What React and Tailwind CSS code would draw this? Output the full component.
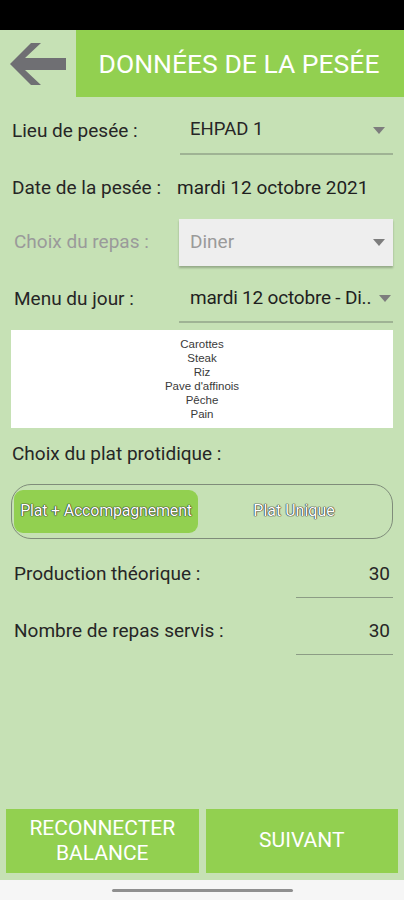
import React from 'react';

const font = { fontFamily: 'Roboto, "Liberation Sans", sans-serif' };
const outline = { textShadow: '0 0 1px #222, 0 0 1px #222, 0 0 1px #222' };

function Caret({ className = '' }) {
  return (
    <svg width="12" height="7" viewBox="0 0 12 7" className={className}>
      <polygon points="0,0 12,0 6,7" fill="#7d7d7d" />
    </svg>
  );
}

function Row({ label, children, labelClass = 'text-[#262626]', className = '' }) {
  return (
    <div className={`flex items-center pl-[12px] pr-[11px] ${className}`}>
      <span className={`text-[19px] ${labelClass}`}>{label}</span>
      {children}
    </div>
  );
}

function NumberRow({ label, value, className = '' }) {
  return (
    <div className={`flex items-center pl-[14px] pr-[11px] ${className}`}>
      <span className="text-[19px] text-[#262626]">{label}</span>
      <div className="ml-auto flex h-[46px] w-[97px] items-center justify-end border-b border-[#8c9c85] pr-[3px] text-[19px] text-[#262626]">
        {value}
      </div>
    </div>
  );
}

export default function App() {
  const menu = ['Carottes', 'Steak', 'Riz', "Pave d'affinois", 'Pêche', 'Pain'];

  return (
    <div style={font} className="flex h-[900px] w-[404px] flex-col overflow-hidden bg-[#c6e1b5]">
      <div className="h-[30px] bg-black" />

      <header className="flex h-[67px]">
        <div className="flex w-[76px] items-center justify-center">
          <svg width="56" height="42" viewBox="0 0 56 42">
            <polygon points="0,21 21,0 31,0 15,15 56,15 56,27 15,27 31,42 21,42" fill="#6f6f73" />
          </svg>
        </div>
        <div className="flex flex-1 items-center justify-center bg-[#92d050] pr-[2px] text-[26.5px] text-white">
          DONNÉES DE LA PESÉE
        </div>
      </header>

      <Row label="Lieu de pesée :" className="mt-[10px]">
        <div className="ml-auto flex h-[48px] w-[213px] items-center border-b-2 border-[#9fb394] pl-[10px] pr-[8px]">
          <span className="text-[18.5px] text-[#262626]">EHPAD 1</span>
          <Caret className="ml-auto" />
        </div>
      </Row>

      <Row label="Date de la pesée :" className="mt-[8px] h-[50px]">
        <span className="ml-[16px] text-[19px] text-[#1f1f1f]">mardi 12 octobre 2021</span>
      </Row>

      <Row label="Choix du repas :" labelClass="text-[#9a9a9a] pl-[2px]" className="mt-[6px]">
        <div className="ml-auto flex h-[47px] w-[214px] items-center bg-[#eeeeee] pl-[11px] pr-[8px] shadow-[0_2px_2px_rgba(0,0,0,0.25)]">
          <span className="text-[19px] text-[#9a9a9a]">Diner</span>
          <Caret className="ml-auto" />
        </div>
      </Row>

      <Row label="Menu du jour :" labelClass="text-[#262626] pl-[2px]" className="mt-[10px]">
        <div className="ml-auto flex h-[47px] w-[214px] items-center overflow-hidden border-b-2 border-[#9fb394] pl-[11px] pr-[2px]">
          <span className="whitespace-nowrap text-[19px] tracking-[-0.2px] text-[#1f1f1f]">mardi 12 octobre - Di..</span>
          <Caret className="ml-auto shrink-0" />
        </div>
      </Row>

      <div className="mx-[11px] mt-[7px] flex h-[98px] flex-col items-center justify-center bg-white">
        {menu.map((item) => (
          <span key={item} className="text-[11.5px] leading-[14px] text-[#3a3a3a]" style={{ fontFamily: '"Liberation Sans", Arial, sans-serif' }}>
            {item}
          </span>
        ))}
      </div>

      <div className="mt-[12px] pl-[12px] text-[19px] text-[#262626]">Choix du plat protidique :</div>

      <div className="mx-[11px] mt-[15px] flex h-[55px] items-center rounded-[20px] border border-[#7f8c7a] px-[2px]">
        <div
          className="flex h-[43px] w-[184px] items-center justify-center rounded-[9px] bg-[#92d050] text-[16px] tracking-[-0.2px] text-white"
          style={outline}
        >
          Plat + Accompagnement
        </div>
        <div className="flex flex-1 items-center justify-center text-[16px] text-white" style={outline}>
          Plat Unique
        </div>
      </div>

      <NumberRow label="Production théorique :" value="30" className="mt-[13px]" />
      <NumberRow label="Nombre de repas servis :" value="30" className="mt-[11px]" />

      <div className="flex-1" />

      <div className="flex gap-[7px] px-[6px] pb-[7px]">
        <button className="flex h-[64px] flex-1 flex-col items-center justify-center bg-[#92d050] text-[21px] leading-[25px] text-white">
          <span>RECONNECTER</span>
          <span>BALANCE</span>
        </button>
        <button className="flex h-[64px] flex-1 items-center justify-center bg-[#92d050] text-[21px] text-white">
          SUIVANT
        </button>
      </div>

      <div className="flex h-[20px] items-center justify-center bg-[#f6f6f6]">
        <div className="h-[3px] w-[181px] rounded-full bg-[#8f8f8f]" />
      </div>
    </div>
  );
}
